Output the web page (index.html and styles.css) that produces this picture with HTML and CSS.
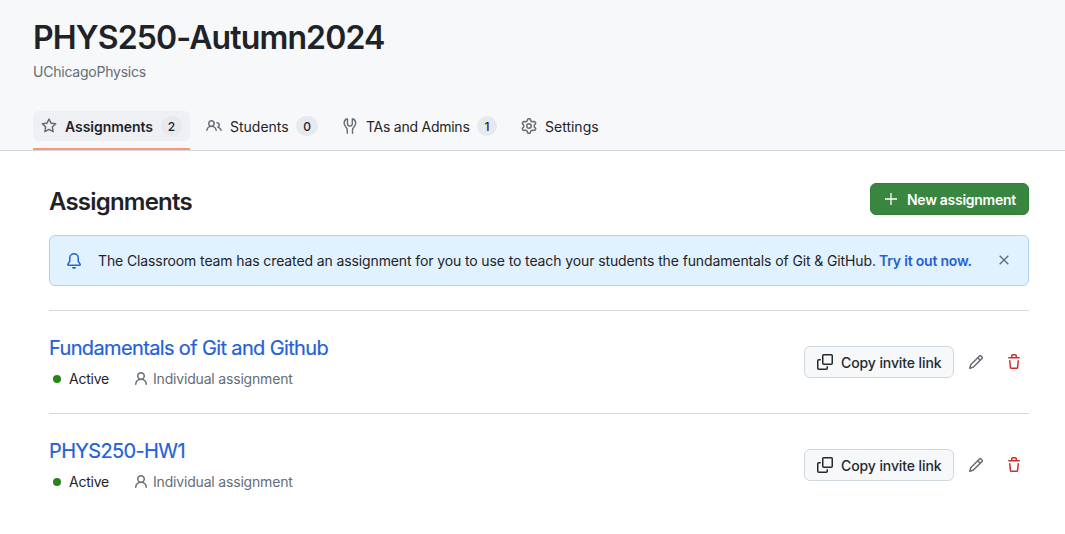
FILE: index.html
```html
<!DOCTYPE html>
<html lang="en">
<head>
<meta charset="utf-8">
<title>PHYS250-Autumn2024</title>
<link rel="stylesheet" href="styles.css">
</head>
<body>
<svg class="sprite" aria-hidden="true">
  <symbol id="copy" viewBox="0 0 16 16"><path d="M0 6.75C0 5.784.784 5 1.750 5h1.500a.75.75 0 0 1 0 1.500h-1.500a.25.25 0 0 0-.25.25v7.500c0 .138.112.25.25.25h7.500a.25.25 0 0 0 .25-.25v-1.500a.75.75 0 0 1 1.500 0v1.500A1.750 1.750 0 0 1 9.250 16h-7.500A1.750 1.750 0 0 1 0 14.250Z"/><path d="M5 1.750C5 .784 5.784 0 6.750 0h7.500C15.216 0 16 .784 16 1.750v7.500A1.750 1.750 0 0 1 14.250 11h-7.500A1.750 1.750 0 0 1 5 9.250Zm1.750-.25a.25.25 0 0 0-.25.25v7.500c0 .138.112.25.25.25h7.500a.25.25 0 0 0 .25-.25v-7.500a.25.25 0 0 0-.25-.25Z"/></symbol>
  <symbol id="pencil" viewBox="0 0 16 16"><path d="M11.013 1.427a1.750 1.750 0 0 1 2.474 0l1.086 1.086a1.750 1.750 0 0 1 0 2.474l-8.610 8.610c-.21.21-.47.364-.756.445l-3.251.93a.75.75 0 0 1-.927-.928l.929-3.250c.081-.286.235-.547.445-.758l8.610-8.610Zm.176 4.823L9.750 4.810l-6.286 6.287a.253.253 0 0 0-.064.108l-.558 1.953 1.953-.558a.253.253 0 0 0 .108-.064Zm1.238-3.763a.25.25 0 0 0-.354 0L10.811 3.750l1.439 1.440 1.263-1.263a.25.25 0 0 0 0-.354Z"/></symbol>
  <symbol id="trash" viewBox="0 0 16 16"><path d="M11 1.750V3h2.250a.75.75 0 0 1 0 1.500H2.750a.75.75 0 0 1 0-1.500H5V1.750C5 .784 5.784 0 6.750 0h2.500C10.216 0 11 .784 11 1.750ZM4.496 6.675l.66 6.600a.25.25 0 0 0 .249.225h5.190a.25.25 0 0 0 .249-.225l.66-6.600a.75.75 0 0 1 1.492.149l-.66 6.600A1.748 1.748 0 0 1 10.595 15h-5.190a1.750 1.750 0 0 1-1.741-1.575l-.66-6.600a.75.75 0 1 1 1.492-.15ZM6.500 1.750V3h3V1.750a.25.25 0 0 0-.25-.25h-2.500a.25.25 0 0 0-.25.25Z"/></symbol>
  <symbol id="person" viewBox="0 0 16 16"><path d="M10.561 8.073a6.005 6.005 0 0 1 3.432 5.142.75.75 0 1 1-1.498.07 4.500 4.500 0 0 0-8.990 0 .75.75 0 0 1-1.498-.07 6.004 6.004 0 0 1 3.431-5.142 3.999 3.999 0 1 1 5.123 0ZM10.500 5a2.500 2.500 0 1 0-5 0 2.500 2.500 0 0 0 5 0Z"/></symbol>
</svg>

<header class="header">
  <h1 class="title">PHYS250-Autumn2024</h1>
  <p class="org">UChicagoPhysics</p>
  <nav class="tabs">
    <a class="tab tab-selected">
      <svg class="icon" viewBox="0 0 16 16"><path d="M8 .25a.75.75 0 0 1 .673.418l1.882 3.815 4.210.612a.75.75 0 0 1 .416 1.279l-3.046 2.970.719 4.192a.751.751 0 0 1-1.088.791L8 12.347l-3.766 1.980a.75.75 0 0 1-1.088-.79l.72-4.194L.818 6.374a.75.75 0 0 1 .416-1.280l4.210-.611L7.327.668A.75.75 0 0 1 8 .250Zm0 2.445L6.615 5.500a.75.75 0 0 1-.564.410l-3.097.450 2.240 2.184a.75.75 0 0 1 .216.664l-.528 3.084 2.769-1.456a.75.75 0 0 1 .698 0l2.770 1.456-.530-3.084a.75.75 0 0 1 .216-.664l2.240-2.183-3.096-.450a.75.75 0 0 1-.564-.410L8 2.694Z"/></svg>
      <span class="label label-assignments">Assignments</span><span class="counter counter-assignments">2</span>
    </a>
    <a class="tab">
      <svg class="icon" viewBox="0 0 16 16"><path d="M2 5.500a3.500 3.500 0 1 1 5.898 2.549 5.508 5.508 0 0 1 3.034 4.084.75.75 0 1 1-1.482.235 4 4 0 0 0-7.900 0 .75.75 0 0 1-1.482-.236A5.507 5.507 0 0 1 3.102 8.050 3.493 3.493 0 0 1 2 5.500ZM11 4a3.001 3.001 0 0 1 2.220 5.018 5.010 5.010 0 0 1 2.560 3.012.749.749 0 0 1-.885.954.752.752 0 0 1-.549-.514 3.507 3.507 0 0 0-2.522-2.372.75.75 0 0 1-.574-.730v-.352a.75.75 0 0 1 .416-.672A1.500 1.500 0 0 0 11 5.500.75.75 0 0 1 11 4Zm-5.500-.5a2 2 0 1 0-.001 3.999A2 2 0 0 0 5.500 3.500Z"/></svg>
      <span class="label label-students">Students</span><span class="counter counter-students">0</span>
    </a>
    <a class="tab">
      <svg class="icon icon-line" viewBox="0 0 16 16"><path d="M5.300 15.200v-3.400C5.300 9.500 2.100 8.800 2.100 5.100c0-1.800.9-3.300 2.500-4.100.5-.2.900 0 .9.500v4.300c0 1.300 1 2.200 2.400 2.200s2.400-.9 2.400-2.200V1.500c0-.5.4-.7.900-.5 1.600.8 2.500 2.300 2.500 4.100 0 3.700-3.200 4.400-3.200 6.700v3.400"/></svg>
      <span class="label label-admins">TAs and Admins</span><span class="counter">1</span>
    </a>
    <a class="tab">
      <svg class="icon" viewBox="0 0 16 16"><path d="M8 0a8.200 8.200 0 0 1 .701.031C9.444.095 9.990.645 10.160 1.290l.288 1.107c.018.066.079.158.212.224.231.114.454.243.668.386.123.082.233.090.299.071l1.103-.303c.644-.176 1.392.021 1.820.630.270.385.506.792.704 1.218.315.675.111 1.422-.364 1.891l-.814.806c-.049.048-.098.147-.088.294.016.257.016.515 0 .772-.010.147.038.246.088.294l.814.806c.475.469.679 1.216.364 1.891a7.977 7.977 0 0 1-.704 1.217c-.428.610-1.176.807-1.820.630l-1.102-.302c-.067-.019-.177-.011-.300.071a5.909 5.909 0 0 1-.668.386c-.133.066-.194.158-.211.224l-.290 1.106c-.168.646-.715 1.196-1.458 1.260a8.006 8.006 0 0 1-1.402 0c-.743-.064-1.289-.614-1.458-1.260l-.289-1.106c-.018-.066-.079-.158-.212-.224a5.738 5.738 0 0 1-.668-.386c-.123-.082-.233-.090-.299-.071l-1.103.303c-.644.176-1.392-.021-1.820-.630a8.120 8.120 0 0 1-.704-1.218c-.315-.675-.111-1.422.363-1.891l.815-.806c.050-.048.098-.147.088-.294a6.214 6.214 0 0 1 0-.772c.010-.147-.038-.246-.088-.294l-.815-.806C.635 6.045.431 5.298.746 4.623a7.920 7.920 0 0 1 .704-1.217c.428-.610 1.176-.807 1.820-.630l1.102.302c.067.019.177.011.300-.071.214-.143.437-.272.668-.386.133-.066.194-.158.211-.224l.290-1.106C6.009.645 6.556.095 7.299.030 7.530.010 7.764 0 8 0Zm-.571 1.525c-.036.003-.108.036-.137.146l-.289 1.105c-.147.561-.549.967-.998 1.189-.173.086-.340.183-.500.290-.417.278-.970.423-1.529.270l-1.103-.303c-.109-.030-.175.016-.195.045-.220.312-.412.644-.573.990-.014.031-.021.110.059.190l.815.806c.411.406.562.957.530 1.456a4.709 4.709 0 0 0 0 .582c.032.499-.119 1.050-.530 1.456l-.815.806c-.081.080-.073.159-.059.190.162.346.353.677.573.989.020.030.085.076.195.046l1.102-.303c.560-.153 1.113-.008 1.530.270.161.107.328.204.501.290.447.222.850.629.997 1.189l.289 1.105c.029.109.101.143.137.146a6.600 6.600 0 0 0 1.142 0c.036-.003.108-.036.137-.146l.289-1.105c.147-.561.549-.967.998-1.189.173-.086.340-.183.500-.290.417-.278.970-.423 1.529-.270l1.103.303c.109.029.175-.016.195-.045.220-.313.411-.644.573-.990.014-.031.021-.110-.059-.190l-.815-.806c-.411-.406-.562-.957-.530-1.456a4.709 4.709 0 0 0 0-.582c-.032-.499.119-1.050.530-1.456l.815-.806c.081-.080.073-.159.059-.190a6.464 6.464 0 0 0-.573-.989c-.020-.030-.085-.076-.195-.046l-1.102.303c-.560.153-1.113.008-1.530-.270a4.440 4.440 0 0 0-.501-.290c-.447-.222-.850-.629-.997-1.189l-.289-1.105c-.029-.110-.101-.143-.137-.146a6.600 6.600 0 0 0-1.142 0ZM11 8a3 3 0 1 1-6 0 3 3 0 0 1 6 0ZM9.500 8a1.500 1.500 0 1 0-3.001.001A1.500 1.500 0 0 0 9.500 8Z"/></svg>
      <span class="label label-settings">Settings</span>
    </a>
  </nav>
</header>

<main class="main">
  <div class="heading-row">
    <h2 class="heading">Assignments</h2>
    <button class="button button-primary">
      <svg class="icon-plus" viewBox="0 0 12 12"><path d="M6 0v12M0 6h12"/></svg>
      <span class="new-label">New assignment</span>
    </button>
  </div>

  <div class="flash">
    <svg class="icon icon-bell" viewBox="0 0 16 16"><path d="M8 16a2 2 0 0 0 1.985-1.750c.017-.137-.097-.25-.235-.25h-3.500c-.138 0-.252.113-.235.25A2 2 0 0 0 8 16ZM3 5a5 5 0 0 1 10 0v2.947c0 .050.015.098.042.139l1.703 2.555A1.519 1.519 0 0 1 13.482 13H2.518a1.516 1.516 0 0 1-1.263-2.360l1.703-2.554A.255.255 0 0 0 3 7.947Zm5-3.500A3.500 3.500 0 0 0 4.500 5v2.947c0 .346-.102.683-.294.970l-1.703 2.556a.017.017 0 0 0 .015.027h10.964a.017.017 0 0 0 .015-.027l-1.703-2.554a1.745 1.745 0 0 1-.294-.970V5A3.500 3.500 0 0 0 8 1.500Z"/></svg>
    <p class="flash-text"><span class="flash-copy">The Classroom team has created an assignment for you to use to teach your students the fundamentals of Git &amp; GitHub.</span><a class="flash-link">Try it out now.</a></p>
    <svg class="icon-close" viewBox="0 0 10 10"><path d="M.7.700l8.600 8.600M9.300.700l-8.600 8.600"/></svg>
  </div>

  <ul class="list">
    <li class="item">
      <div class="info">
        <a class="name">Fundamentals of Git and Github</a>
        <div class="meta">
          <span class="dot"></span><span class="status">Active</span>
          <svg class="icon-person"><use href="#person"/></svg><span class="kind">Individual assignment</span>
        </div>
      </div>
      <div class="actions">
        <button class="button"><svg class="icon-copy"><use href="#copy"/></svg><span class="copy-label">Copy invite link</span></button>
        <svg class="icon-edit"><use href="#pencil"/></svg>
        <svg class="icon-trash"><use href="#trash"/></svg>
      </div>
    </li>
    <li class="item">
      <div class="info">
        <a class="name">PHYS250-HW1</a>
        <div class="meta">
          <span class="dot"></span><span class="status">Active</span>
          <svg class="icon-person"><use href="#person"/></svg><span class="kind">Individual assignment</span>
        </div>
      </div>
      <div class="actions">
        <button class="button"><svg class="icon-copy"><use href="#copy"/></svg><span class="copy-label">Copy invite link</span></button>
        <svg class="icon-edit"><use href="#pencil"/></svg>
        <svg class="icon-trash"><use href="#trash"/></svg>
      </div>
    </li>
  </ul>
</main>
</body>
</html>
```
FILE: styles.css
```css
* { box-sizing: border-box; }
body {
  margin: 0;
  background: #fff;
  color: #1f2328;
  font: 14px/20px Inter, "Liberation Sans", sans-serif;
  overflow: hidden;
}
h1, h2, p, ul { margin: 0; padding: 0; }
svg { display: block; flex: none; fill: currentColor; }
span, a { white-space: nowrap; }
.sprite { display: none; }

.header {
  height: 151px;
  padding: 18px 33px 0;
  background: #f6f8fa;
  border-bottom: 1px solid #d0d7de;
}
.title { font-size: 32px; line-height: 40px; font-weight: 600; letter-spacing: -0.87px; }
.org { margin-top: 4px; color: #656d76; letter-spacing: -0.23px; }
.tabs { display: flex; margin-top: 29px; height: 39px; }
.tab { display: flex; align-items: center; height: 30px; padding: 0 8px; margin-right: 8px; }
.tab .icon { margin-right: 8px; }
.tab-selected { background: #eef0f3; border-radius: 6px; position: relative; font-weight: 600; }
.tab-selected::after {
  content: "";
  position: absolute;
  left: 0;
  right: 0;
  bottom: -9px;
  height: 2px;
  background: #f9977c;
}
.icon { width: 16px; height: 16px; color: #656d76; }
.icon-line { fill: none; stroke: currentColor; stroke-width: 1.4; stroke-linecap: round; stroke-linejoin: round; }
.label { margin-top: 2px; }
.label-assignments { width: 88px; letter-spacing: -0.05px; }
.label-students { width: 58px; }
.label-admins { width: 103px; letter-spacing: -0.25px; }
.counter {
  width: 20px;
  height: 20px;
  margin-left: 8px;
  border-radius: 10px;
  background: #e6eaef;
  color: #1f2328;
  font-size: 12px;
  line-height: 21px;
  font-weight: 500;
  text-align: center;
}
.counter-assignments { width: 21px; }
.counter-students { width: 22px; }

.main { padding: 32px 36px 0 49px; }
.heading-row { display: flex; justify-content: space-between; height: 52px; }
.heading { margin-top: 3px; font-size: 24px; line-height: 32px; font-weight: 600; letter-spacing: -0.8px; }
.button {
  display: flex;
  align-items: center;
  height: 32px;
  width: 150px;
  padding: 0 12px;
  border: 1px solid #d0d7de;
  border-radius: 6px;
  background: #f6f8fa;
  color: #24292f;
  font: 500 14px/20px Inter, "Liberation Sans", sans-serif;
  letter-spacing: -0.1px;
}
.button span { margin-top: 2px; }
.button-primary { width: 159px; padding: 0 14px; background: #388640; border-color: #347d3b; color: #fff; font-weight: 600; letter-spacing: -0.28px; }
.icon-plus { width: 12px; height: 12px; margin-right: 10px; fill: none; stroke: currentColor; stroke-width: 1.3; }
.icon-copy { width: 16px; height: 16px; margin-right: 8px; }

.flash {
  display: flex;
  align-items: center;
  height: 51px;
  padding: 0 19px 0 16px;
  border: 1px solid #a9d3fb;
  border-radius: 6px;
  background: #e0f2ff;
}
.icon-bell { color: #2365dd; margin-right: 16px; }
.flash-text { display: flex; flex: 1; }
.flash-copy { width: 781px; letter-spacing: -0.115px; }
.flash-link { color: #2461d6; font-weight: 600; letter-spacing: -0.2px; }
.icon-close { width: 10px; height: 10px; margin-bottom: 2px; fill: none; stroke: #656d76; stroke-width: 1.4; }

.list { margin-top: 24px; list-style: none; }
.item { display: flex; justify-content: space-between; height: 103px; padding-top: 22px; border-top: 1px solid #d5d9e2; }
.name { display: block; font-size: 20px; line-height: 30px; color: #2461d6; letter-spacing: -0.64px; -webkit-text-stroke: 0.2px; }
.meta { display: flex; align-items: center; margin-top: 6px; height: 20px; color: #656d76; }
.dot { width: 8px; height: 8px; margin: 0 8px 0 4px; border-radius: 50%; background: #298217; }
.status { width: 40px; margin-right: 24px; color: #1f2328; letter-spacing: -0.25px; }
.kind { letter-spacing: -0.18px; }
.icon-person { width: 16px; height: 16px; margin-right: 4px; }
.actions { display: flex; align-items: center; height: 32px; margin-top: 13px; padding-right: 7px; }
.icon-edit { width: 16px; height: 16px; margin-left: 14px; color: #656d76; }
.icon-trash { width: 16px; height: 16px; margin-left: 22px; color: #cd3030; }
```
